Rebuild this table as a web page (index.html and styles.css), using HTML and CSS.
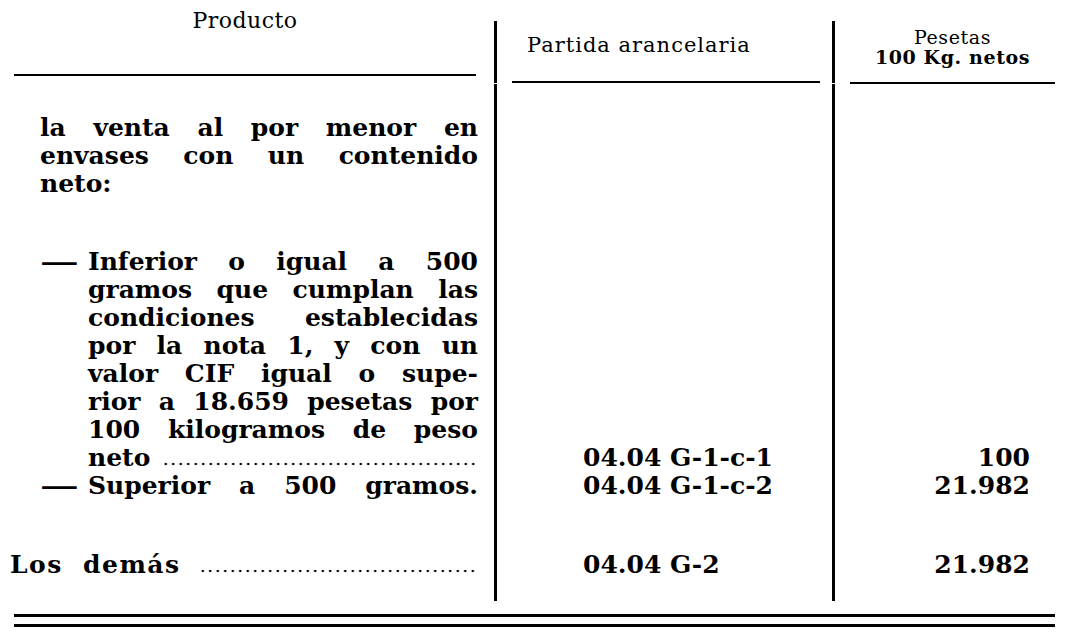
FILE: index.html
```html
<!DOCTYPE html>
<html lang="es">
<head>
<meta charset="utf-8">
<title>Partida arancelaria</title>
<link rel="stylesheet" href="styles.css">
</head>
<body>
<div class="sheet">
  <div class="table">
    <div class="h h1">
      <div class="htext">Producto</div>
      <div class="rule rule1"></div>
    </div>
    <div class="h h2 mid">
      <div class="htext">Partida arancelaria</div>
      <div class="rule rule2"></div>
    </div>
    <div class="h h3">
      <div class="htext small">Pesetas</div>
      <div class="htext small bold">100 Kg. netos</div>
      <div class="rule rule3"></div>
    </div>

    <div class="c1 intro">
      <span class="ln">la venta al por menor en</span>
      <span class="ln">envases con un contenido</span>
      <span class="ln last">neto:</span>
    </div>
    <div class="c2 mid"></div>
    <div class="c3"></div>

    <div class="c1 item first">
      <span class="dash">—</span>
      <div class="lines">
        <span class="ln">Inferior o igual a 500</span>
        <span class="ln">gramos que cumplan las</span>
        <span class="ln">condiciones establecidas</span>
        <span class="ln">por la nota 1, y con un</span>
        <span class="ln">valor CIF igual o supe-</span>
        <span class="ln">rior a 18.659 pesetas por</span>
        <span class="ln">100 kilogramos de peso</span>
        <span class="leader"><span>neto</span><span class="dots"></span></span>
      </div>
    </div>
    <div class="c2 mid code">04.04 G-1-c-1</div>
    <div class="c3 value">100</div>

    <div class="c1 item">
      <span class="dash">—</span>
      <div class="lines">
        <span class="ln">Superior a 500 gramos.</span>
      </div>
    </div>
    <div class="c2 mid code">04.04 G-1-c-2</div>
    <div class="c3 value">21.982</div>

    <div class="c1 rest">
      <span class="leader"><span class="label">Los demás</span><span class="dots"></span></span>
    </div>
    <div class="c2 mid code">04.04 G-2</div>
    <div class="c3 value">21.982</div>

    <div class="c1 tail"></div>
    <div class="c2 mid tail"></div>
    <div class="c3 tail"></div>
  </div>
  <div class="double"></div>
</div>
</body>
</html>
```
FILE: styles.css
```css
html, body {
  margin: 0;
  padding: 0;
  background: #ffffff;
}

.sheet {
  width: 1071px;
  height: 641px;
  overflow: hidden;
  color: #000;
  font-family: "DejaVu Serif", "Liberation Serif", serif;
}

.table {
  display: grid;
  grid-template-columns: 494px 341px 1fr;
}

.mid {
  border-left: 3px solid #000;
  border-right: 3px solid #000;
}

/* header */
.h {
  align-self: start;
}

.htext {
  text-align: center;
}

.rule {
  height: 2px;
  background: #000;
}

.h1 {
  padding: 8px 18px 0 14px;
}
.h1 .htext {
  font-size: 22px;
  line-height: 26px;
  letter-spacing: 0.5px;
}
.rule1 {
  margin-top: 40px;
}

.h2 {
  margin-top: 21px;
  padding: 12px 12px 0 15px;
}
.h2 .htext {
  font-size: 21px;
  line-height: 24px;
  letter-spacing: 1px;
  text-align: left;
  padding-left: 15px;
}
.rule2 {
  margin-top: 24px;
}

.h3 {
  padding: 27px 16px 0 15px;
}
.h3 .small {
  font-size: 19px;
  line-height: 20px;
  letter-spacing: 0.6px;
}
.bold {
  font-weight: bold;
}
.rule3 {
  margin-top: 15px;
}

/* body */
.c1, .c2, .c3 {
  font-size: 25px;
  line-height: 28px;
  font-weight: bold;
}

.c1 {
  padding: 0 16px 0 40px;
}

.ln {
  display: block;
  text-align: justify;
  text-align-last: justify;
}
.ln.last {
  text-align-last: left;
}

.intro {
  padding-top: 30px;
}

.item {
  display: flex;
}
.item.first {
  padding-top: 50px;
}

.dash {
  width: 48px;
  flex: none;
  display: inline-block;
  transform: scaleX(1.55);
  transform-origin: left center;
}

.lines {
  flex: 1;
  min-width: 0;
}

.leader {
  display: flex;
}

.dots {
  flex: 1;
  margin-left: 12px;
  background-image: radial-gradient(circle, #000 1.1px, transparent 1.6px);
  background-size: 7.5px 4px;
  background-repeat: repeat-x;
  background-position: 0 18px;
}

.rest {
  padding: 51px 16px 0 10px;
}
.rest .label {
  letter-spacing: 1.5px;
  word-spacing: 10px;
}
.rest .dots {
  margin-left: 18px;
}

.code {
  display: flex;
  align-items: flex-end;
  padding-left: 86px;
}

.value {
  display: flex;
  align-items: flex-end;
  justify-content: flex-end;
  padding-right: 41px;
}

.tail {
  height: 22px;
}

.double {
  height: 7px;
  margin: 13px 16px 0 14px;
  border-top: 3px solid #000;
  border-bottom: 3px solid #000;
}
```
